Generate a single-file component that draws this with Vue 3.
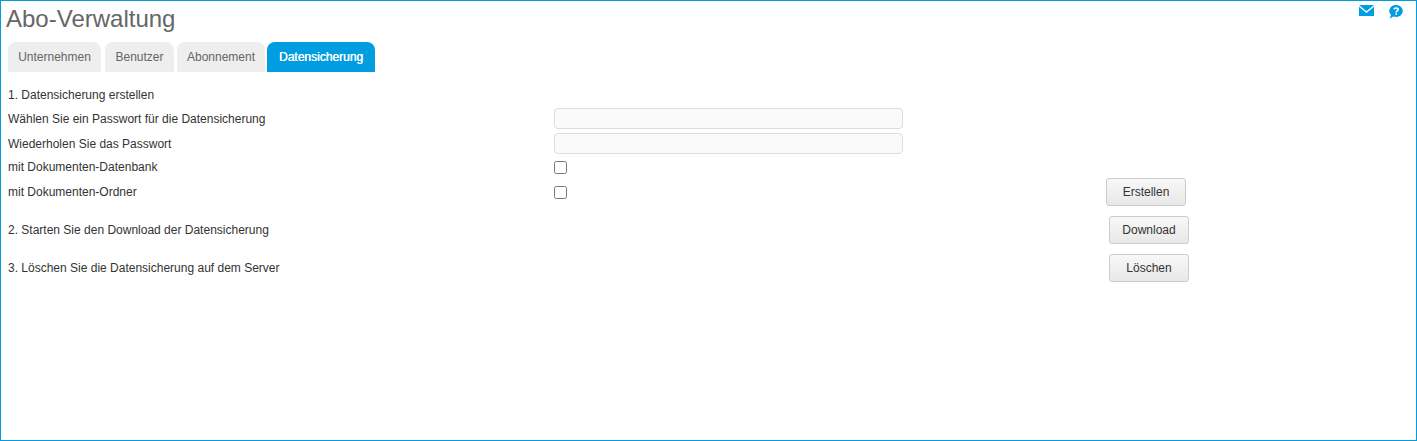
<template>
  <div class="frame">
    <header class="top">
      <h1>Abo-Verwaltung</h1>
      <div class="top-icons">
        <svg width="15" height="11" viewBox="0 0 15 11">
          <path fill="#009ee0" d="M0 0h15L7.5 6.2z" />
          <path fill="#009ee0" d="M0 1.8V11h15V1.8L7.5 8z" />
        </svg>
        <svg width="15" height="14" viewBox="0 0 15 14">
          <path fill="#009ee0" d="M8.2 0a6.6 6 0 0 1 0 12c-.9 0-1.8-.2-2.6-.5L1.5 13.5l1.6-3.4A6.6 6 0 0 1 8.2 0z" />
          <path fill="none" stroke="#fff" stroke-width="1.6" d="M6.2 4.6c0-1 .9-1.6 2-1.6s2 .6 2 1.5c0 1.5-2 1.4-2 2.9" />
          <rect x="7.4" y="8.2" width="1.6" height="1.6" fill="#fff" />
        </svg>
      </div>
    </header>

    <nav class="tabs">
      <a v-for="t in tabs" :key="t.label" :class="['tab', t.cls, { active: t.active }]">{{ t.label }}</a>
    </nav>

    <section class="content">
      <div class="row heading">1. Datensicherung erstellen</div>

      <div class="row field">
        <label>Wählen Sie ein Passwort für die Datensicherung</label>
        <input type="password" />
      </div>
      <div class="row field">
        <label>Wiederholen Sie das Passwort</label>
        <input type="password" />
      </div>
      <div class="row check">
        <label>mit Dokumenten-Datenbank</label>
        <span class="box"></span>
      </div>
      <div class="row check last">
        <label>mit Dokumenten-Ordner</label>
        <span class="box"></span>
        <button class="btn first-btn">Erstellen</button>
      </div>

      <div class="row step">
        <label>2. Starten Sie den Download der Datensicherung</label>
        <button class="btn">Download</button>
      </div>
      <div class="row step">
        <label>3. Löschen Sie die Datensicherung auf dem Server</label>
        <button class="btn">Löschen</button>
      </div>
    </section>
  </div>
</template>

<script setup>
const tabs = [
  { label: 'Unternehmen', cls: 't1' },
  { label: 'Benutzer', cls: 't2' },
  { label: 'Abonnement', cls: 't3' },
  { label: 'Datensicherung', cls: 't4', active: true }
]
</script>

<style>
html,
body {
  margin: 0;
  background: #fff;
}
</style>

<style scoped>
.frame {
  box-sizing: border-box;
  width: 1417px;
  height: 441px;
  border: 1px solid #009ee0;
  overflow: hidden;
  font-family: "Liberation Sans", Arial, sans-serif;
  font-size: 12px;
  color: #333;
}

/* header */
.top {
  display: flex;
  justify-content: space-between;
  height: 41px;
}

h1 {
  margin: 4px 0 0 5px;
  font-size: 24px;
  line-height: 28px;
  font-weight: 400;
  color: #666;
}

.top-icons {
  display: flex;
  align-items: flex-start;
  gap: 14px;
  padding: 4px 13px 0 0;
}

/* tabs */
.tabs {
  display: flex;
  height: 30px;
  margin-left: 7px;
}

.tab {
  display: flex;
  align-items: center;
  justify-content: center;
  box-sizing: border-box;
  height: 30px;
  border-radius: 8px 8px 0 0;
  background: #eee;
  color: #666;
}

.t1 { width: 93px; margin-right: 4px; }
.t2 { width: 69px; margin-right: 3px; }
.t3 { width: 88px; margin-right: 2px; }
.t4 { width: 108px; }

.tab.active {
  background: #009ee0;
  color: #fff;
  text-shadow: 0.3px 0 0 #fff;
}

/* content */
.content {
  padding: 14px 0 0 7px;
}

.row {
  display: flex;
  align-items: center;
}

.row label {
  flex: 0 0 546px;
}

.heading {
  height: 17px;
  margin-bottom: 5px;
}

.field {
  height: 21px;
  margin-bottom: 4px;
}

.field input {
  box-sizing: border-box;
  width: 349px;
  height: 21px;
  padding: 0 6px;
  background: #fafafa;
  border: 1px solid #ddd;
  border-radius: 4px;
}

.check {
  height: 13px;
  margin: 7px 0 12px;
}

.check + .check {
  margin-top: 0;
}

.check label {
  margin-bottom: 2px;
}

.box {
  box-sizing: border-box;
  width: 13px;
  height: 13px;
  background: #fff;
  border: 1px solid #767676;
  border-radius: 2.5px;
}

.check.last {
  margin-bottom: 17px;
}

.btn {
  box-sizing: border-box;
  width: 80px;
  height: 28px;
  margin-left: auto;
  margin-right: 227px;
  padding: 0;
  background: linear-gradient(#f8f8f8, #e8e8e8);
  border: 1px solid #ccc;
  border-radius: 3px;
  font: inherit;
  color: #333;
}

.first-btn {
  margin-right: 230px;
  margin-bottom: 1px;
}

.step {
  height: 28px;
  margin-bottom: 10px;
}
</style>
